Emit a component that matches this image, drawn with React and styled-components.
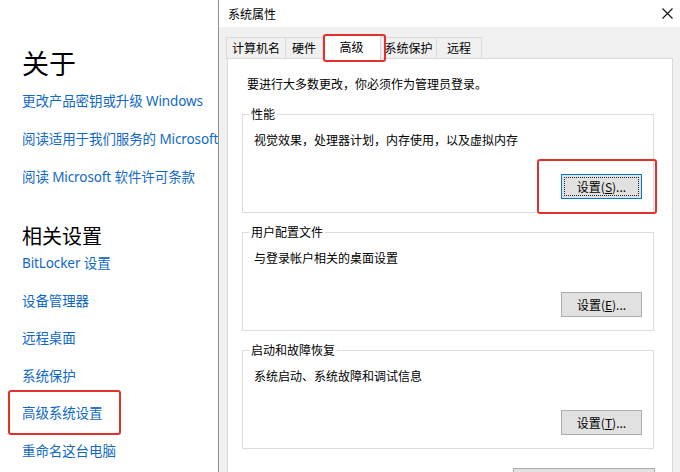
import React from 'react'
import styled, { createGlobalStyle, css } from 'styled-components'

const GlobalStyle = createGlobalStyle`
  html, body {
    margin: 0;
    padding: 0;
  }
  body {
    width: 680px;
    height: 472px;
    overflow: hidden;
    background: #fff;
    font-family: "Noto Sans", "Noto Sans CJK SC", sans-serif;
    color: #000;
  }
`

// red annotation frame drawn over an element, insets = [top, right, bottom, left]
const redBox = css`
  position: relative;
  &::after {
    content: "";
    position: absolute;
    top: ${(p) => p.$box[0]}px;
    right: ${(p) => p.$box[1]}px;
    bottom: ${(p) => p.$box[2]}px;
    left: ${(p) => p.$box[3]}px;
    border: 2px solid #e3302b;
    border-radius: 3px;
    pointer-events: none;
    z-index: 5;
  }
`

const Screen = styled.div`
  display: flex;
  width: 680px;
  height: 472px;
`

const SettingsPane = styled.div`
  width: 218px;
  flex-shrink: 0;
  overflow: hidden;
  padding: 48px 0 0 22px;
  box-sizing: border-box;
  white-space: nowrap;
`

const PageTitle = styled.h1`
  margin: 0 0 4px;
  font-size: 27px;
  line-height: 30px;
  font-weight: 400;
  font-family: "Noto Sans CJK SC", sans-serif;
`

const SectionTitle = styled.h2`
  margin: 31px 0 0;
  font-size: 20px;
  line-height: 18px;
  height: 18px;
  font-weight: 400;
  font-family: "Noto Sans CJK SC", sans-serif;
`

const SettingLink = styled.a`
  display: block;
  width: fit-content;
  height: ${(p) => (p.$tight ? 37.6 : 38)}px;
  line-height: ${(p) => (p.$tight ? 37.6 : 38)}px;
  font-size: 13.5px;
  letter-spacing: -0.1px;
  color: #1169c4;
  text-decoration: none;
  ${(p) => p.$box && redBox}
`

const Dialog = styled.div`
  flex: 1;
  display: flex;
  flex-direction: column;
  border-left: 1px solid #8e8e8e;
  font-family: "Noto Sans CJK SC", sans-serif;
  font-size: 12px;
`

const TitleBar = styled.div`
  height: 27px;
  flex-shrink: 0;
  background: #fff;
  display: flex;
  align-items: center;
  justify-content: space-between;
  padding: 0 7px 0 9px;
`

const TitleText = styled.span`
  font-size: 12px;
  line-height: 14px;
`

const CloseIcon = () => (
  <svg width="11" height="11" viewBox="0 0 11 11">
    <path d="M0.5 0.5 L10.5 10.5 M10.5 0.5 L0.5 10.5" stroke="#111" strokeWidth="1.1" />
  </svg>
)

const DialogBody = styled.div`
  flex: 1;
  background: #f0f0f0;
  padding: 8px 0 0 8px;
  display: flex;
  flex-direction: column;
`

const TabStrip = styled.div`
  display: flex;
  align-items: flex-end;
  height: 24px;
  position: relative;
  z-index: 2;
`

const Tab = styled.div`
  box-sizing: border-box;
  width: ${(p) => p.$w}px;
  height: ${(p) => (p.$active ? 25 : 22)}px;
  margin-bottom: ${(p) => (p.$active ? -1 : 0)}px;
  background: ${(p) => (p.$active ? '#fff' : '#f0f0f0')};
  border: 1px solid #d9d9d9;
  border-bottom: ${(p) => (p.$active ? 'none' : '1px solid #d9d9d9')};
  margin-left: -1px;
  display: flex;
  align-items: center;
  justify-content: center;
  padding-bottom: ${(p) => (p.$active ? 3 : 0)}px;
  font-size: 12px;
  line-height: 14px;
  ${(p) => p.$box && redBox}
`

const TabPanel = styled.div`
  flex: 1;
  margin: -1px 7px 0 0;
  background: #fff;
  border: 1px solid #d9d9d9;
  border-bottom: none;
  padding: 17px 18px 0 14px;
  display: flex;
  flex-direction: column;
`

const Notice = styled.p`
  margin: 0 0 22px 5px;
  font-size: 12px;
  line-height: 16px;
`

const Group = styled.div`
  position: relative;
  height: 99px;
  box-sizing: border-box;
  border: 1px solid #dcdcdc;
  padding: 0 11px 13px 11px;
  margin-bottom: 19px;
  display: flex;
  flex-direction: column;
`

const GroupLabel = styled.span`
  position: absolute;
  top: -8px;
  left: 6px;
  padding: 0 2px;
  background: #fff;
  font-size: 12px;
  line-height: 14px;
`

const GroupText = styled.div`
  margin-top: 17px;
  font-size: 12px;
  line-height: 16px;
`

const ButtonRow = styled.div`
  margin-top: auto;
  display: flex;
  justify-content: flex-end;
`

const Button = styled.button`
  box-sizing: border-box;
  width: ${(p) => p.$w || 81}px;
  height: 25px;
  padding: 0;
  background: #e1e1e1;
  border: 1px solid ${(p) => (p.$focus ? '#0078d7' : '#adadad')};
  font-family: "Noto Sans CJK SC", sans-serif;
  font-size: 12px;
  color: #000;
  outline: ${(p) => (p.$focus ? '1px dotted #222' : 'none')};
  outline-offset: -4px;
  ${(p) => p.$box && redBox}

  u {
    text-decoration: underline;
  }
`

const BottomRow = styled.div`
  display: flex;
  justify-content: flex-end;
  margin-right: -1px;
`

const groups = [
  { label: '性能', text: '视觉效果，处理器计划，内存使用，以及虚拟内存', key: 'S', focus: true },
  { label: '用户配置文件', text: '与登录帐户相关的桌面设置', key: 'E' },
  { label: '启动和故障恢复', text: '系统启动、系统故障和调试信息', key: 'T' },
]

const tabs = [
  { name: '计算机名', w: 60 },
  { name: '硬件', w: 38 },
  { name: '高级', w: 59, active: true },
  { name: '系统保护', w: 57 },
  { name: '远程', w: 46 },
]

export default function App() {
  return (
    <>
      <GlobalStyle />
      <Screen>
        <SettingsPane>
          <PageTitle>关于</PageTitle>
          <SettingLink>更改产品密钥或升级 Windows</SettingLink>
          <SettingLink>阅读适用于我们服务的 Microsoft</SettingLink>
          <SettingLink>阅读 Microsoft 软件许可条款</SettingLink>

          <SectionTitle>相关设置</SectionTitle>
          <SettingLink $tight>BitLocker 设置</SettingLink>
          <SettingLink $tight>设备管理器</SettingLink>
          <SettingLink $tight>远程桌面</SettingLink>
          <SettingLink $tight>系统保护</SettingLink>
          <SettingLink $tight $box={[-5, -19, -2, -14]}>高级系统设置</SettingLink>
          <SettingLink $tight>重命名这台电脑</SettingLink>
        </SettingsPane>

        <Dialog>
          <TitleBar>
            <TitleText>系统属性</TitleText>
            <CloseIcon />
          </TitleBar>
          <DialogBody>
            <TabStrip>
              {tabs.map((t) => (
                <Tab key={t.name} $w={t.w} $active={t.active} $box={t.active ? [-2, -6, -2, 0] : null}>
                  {t.name}
                </Tab>
              ))}
            </TabStrip>
            <TabPanel>
              <Notice>要进行大多数更改，你必须作为管理员登录。</Notice>
              {groups.map((g) => (
                <Group key={g.label}>
                  <GroupLabel>{g.label}</GroupLabel>
                  <GroupText>{g.text}</GroupText>
                  <ButtonRow>
                    <Button $focus={g.focus} $box={g.focus ? [-16, -16, -16, -25] : null}>
                      设置(<u>{g.key}</u>)...
                    </Button>
                  </ButtonRow>
                </Group>
              ))}
              <BottomRow>
                <Button $w={142}>环境变量(<u>N</u>)...</Button>
              </BottomRow>
            </TabPanel>
          </DialogBody>
        </Dialog>
      </Screen>
    </>
  )
}
